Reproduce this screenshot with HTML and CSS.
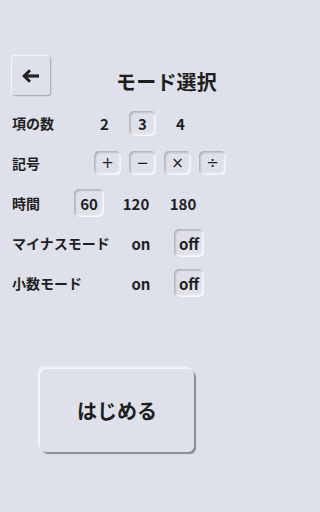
FILE: index.html
```html
<!DOCTYPE html>
<html lang="ja">
<head>
<meta charset="utf-8">
<title>モード選択</title>
<link rel="stylesheet" href="styles.css">
</head>
<body>
<div class="screen">
  <header class="header">
    <button class="back" aria-label="戻る">
      <svg width="18" height="14" viewBox="0 0 18 14" aria-hidden="true">
        <path d="M17 7H4" stroke="#222" stroke-width="3.2" fill="none"/>
        <path d="M8 1.2L2.2 7L8 12.8" stroke="#222" stroke-width="3" fill="none" stroke-linejoin="miter"/>
      </svg>
    </button>
    <h1 class="title">モード選択</h1>
  </header>

  <div class="rows">
    <div class="row row-count">
      <span class="label">項の数</span>
      <div class="opts">
        <span class="opt">2</span>
        <span class="opt on">3</span>
        <span class="opt">4</span>
      </div>
    </div>
    <div class="row row-ops">
      <span class="label">記号</span>
      <div class="opts">
        <span class="opt on">+</span>
        <span class="opt on">−</span>
        <span class="opt on">×</span>
        <span class="opt on">÷</span>
      </div>
    </div>
    <div class="row row-time">
      <span class="label">時間</span>
      <div class="opts">
        <span class="opt on">60</span>
        <span class="opt">120</span>
        <span class="opt">180</span>
      </div>
    </div>
    <div class="row row-toggle">
      <span class="label">マイナスモード</span>
      <div class="opts">
        <span class="opt">on</span>
        <span class="opt on">off</span>
      </div>
    </div>
    <div class="row row-toggle">
      <span class="label">小数モード</span>
      <div class="opts">
        <span class="opt">on</span>
        <span class="opt on">off</span>
      </div>
    </div>
  </div>

  <div class="start-wrap">
    <button class="start">はじめる</button>
  </div>
</div>
</body>
</html>
```

FILE: styles.css
```css
html, body {
  margin: 0;
  padding: 0;
}
body {
  background: #dee1e9;
  color: #1f1f1f;
  font-family: "Noto Sans CJK JP", "Noto Sans", sans-serif;
  width: 236px;
  height: 512px;
  overflow: hidden;
}
.screen {
  padding-top: 56px;
}
.header {
  display: flex;
  justify-content: space-between;
  align-items: flex-start;
  padding: 0 19px 0 12px;
  height: 39px;
}
.back {
  width: 38px;
  height: 39px;
  border: none;
  border-radius: 2px;
  background: #dee1e9;
  box-shadow: 1px 1px 1.5px rgba(0,0,0,0.28), -1px -1px 1px rgba(255,255,255,0.75);
  display: flex;
  align-items: center;
  justify-content: center;
  padding: 0;
}
.title {
  margin: 0;
  padding-top: 14px;
  font-size: 20px;
  font-weight: 700;
  line-height: 24px;
  letter-spacing: 0.2px;
}
.rows {
  margin-top: 8px;
  display: flex;
  flex-direction: column;
}
.row {
  height: 40px;
  display: flex;
  align-items: center;
  padding-left: 12px;
}
.label {
  width: 62px;
  flex: none;
  font-size: 14px;
  font-weight: 700;
  white-space: nowrap;
}
.opts {
  display: flex;
  align-items: center;
}
.opt {
  display: flex;
  align-items: center;
  justify-content: center;
  font-size: 15px;
  font-weight: 700;
  border-radius: 5px;
  box-sizing: border-box;
}
.opt.on {
  box-shadow: inset 1.5px 1.5px 2px rgba(0,0,0,0.22), inset -1.5px -1.5px 2px rgba(255,255,255,0.85);
}
.row-count .opts {
  padding-left: 17px;
  gap: 11px;
}
.row-count .opt {
  width: 27px;
  height: 25px;
}
.row-ops .opts {
  padding-left: 20px;
  gap: 8px;
}
.row-ops .opt {
  width: 27px;
  height: 24px;
  font-weight: 400;
  font-size: 15px;
  font-family: "DejaVu Sans", sans-serif;
}
.row-time .opts {
  padding-left: 0;
  gap: 17px;
}
.row-time .opt {
  width: 30px;
  height: 28px;
}
.row-toggle .opts {
  padding-left: 52px;
  gap: 18px;
}
.row-toggle .opt {
  width: 30px;
  height: 28px;
}
.start-wrap {
  display: flex;
  justify-content: center;
  padding-top: 66px;
  padding-right: 2px;
}
.start {
  width: 154px;
  height: 83px;
  border: none;
  border-radius: 6px;
  background: #dee1e9;
  color: #1f1f1f;
  font-family: "Noto Sans CJK JP", "Noto Sans", sans-serif;
  font-size: 20px;
  font-weight: 700;
  box-shadow: 2px 2px 1px rgba(80,84,95,0.6), -2px -2px 2px rgba(255,255,255,0.7);
}
```
